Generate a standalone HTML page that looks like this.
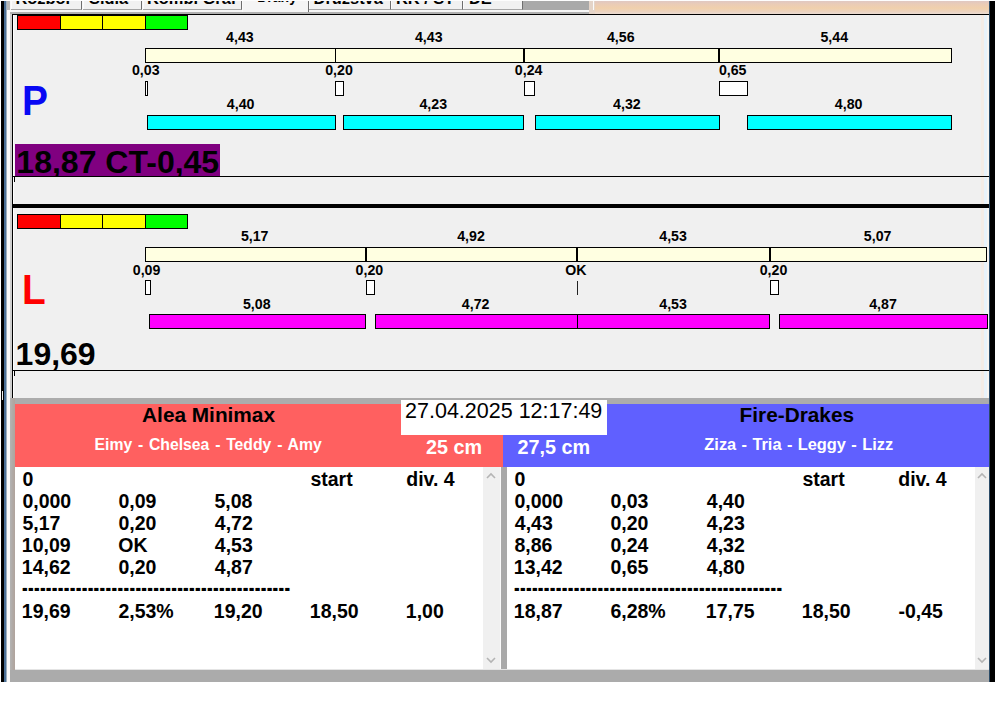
<!DOCTYPE html>
<html lang="cs">
<head>
<meta charset="utf-8">
<title>Dráhy</title>
<style>
html,body{margin:0;padding:0;background:#fff;}
body{width:995px;height:716px;position:relative;overflow:hidden;font-family:"Liberation Sans", sans-serif;}
.r{position:absolute;box-sizing:border-box;}
.t{position:absolute;white-space:pre;line-height:1;font-weight:bold;color:#000;transform-origin:0 0;display:block;}
.lab{transform:scaleY(1.06);transform-origin:0 84.65%;}
.tab{position:absolute;top:0;height:9.5px;box-sizing:border-box;background:#f1f1f1;border-right:1px solid #6e6e6e;border-bottom:1px solid #a6a6a6;box-shadow:inset 1px 1px 0 #fbfbfb;overflow:hidden;}
.tab.act{height:12px;background:#f5f5f5;border-bottom:0;}
</style>
</head>
<body>
<div class="r" style="left:1px;top:0px;width:3px;height:682px;background:#000;"></div>
<div class="r" style="left:4px;top:0px;width:2px;height:682px;background:#4a6f96;"></div>
<div class="r" style="left:6px;top:0px;width:1.4px;height:682px;background:#9fb0c0;"></div>
<div class="r" style="left:2px;top:391px;width:1.3px;height:9px;background:#f0f0f0;"></div>
<div class="r" style="left:7px;top:0px;width:3px;height:682px;background:#fafafa;"></div>
<div class="r" style="left:10px;top:10px;width:2px;height:388px;background:#cfcfcf;"></div>
<div class="r" style="left:7px;top:0px;width:3px;height:10px;background:#b8b8b8;"></div>
<div class="r" style="left:990px;top:1px;width:5px;height:681px;background:#000;"></div>
<div class="r" style="left:989px;top:1px;width:1px;height:681px;background:#2a4a66;"></div>
<div class="r" style="left:10px;top:1px;width:585px;height:12px;background:#f6f6f6;"></div>
<div class="r" style="left:10px;top:12px;width:585px;height:2px;background:#b0b0b0;"></div>
<div class="r" style="left:522px;top:1px;width:67px;height:9px;background:#a9a9a9;"></div>
<div class="r" style="left:589px;top:1px;width:6px;height:13px;background:#e4d4c8;"></div>
<div class="r" style="left:592.5px;top:1px;width:1.5px;height:9px;background:#fbfbfb;"></div>
<div class="r" style="left:595px;top:1px;width:394px;height:13px;background:linear-gradient(#e0c8c2 0%,#eaccb6 25%,#f0d0ac 55%,#ecd3be 80%,#eadbd3 100%);"></div>
<div class="r" style="left:0px;top:0px;width:995px;height:1px;background:#fdfdfd;z-index:5;"></div>
<div class="r" style="left:12px;top:14px;width:977px;height:384px;background:#f0f0f0;"></div>
<div class="r" style="left:12px;top:14px;width:1px;height:384px;background:#000;"></div>
<div class="r" style="left:13px;top:15px;width:1px;height:383px;background:#fff;"></div>
<div class="r" style="left:12px;top:14px;width:977px;height:1px;background:#000;"></div>
<div class="r" style="left:981px;top:15px;width:3px;height:383px;background:#f4ece6;"></div>
<div class="r" style="left:984px;top:15px;width:3px;height:383px;background:#e8f2fa;"></div>
<div class="r" style="left:987px;top:15px;width:2px;height:383px;background:#f8f4f0;"></div>
<div class="r" style="left:12px;top:176px;width:977px;height:1px;background:#000;"></div>
<div class="r" style="left:14px;top:176px;width:1px;height:6px;background:#000;"></div>
<div class="r" style="left:12px;top:204px;width:977px;height:4px;background:#000;"></div>
<div class="r" style="left:12px;top:370px;width:977px;height:1px;background:#000;"></div>
<div class="r" style="left:14px;top:370px;width:1px;height:6px;background:#000;"></div>
<div class="r" style="left:10px;top:398px;width:5px;height:284px;background:linear-gradient(90deg,#b4b4b4 0%,#b0aaa6 50%,#b0a39c 100%);"></div>
<div class="r" style="left:15px;top:398px;width:974px;height:6px;background:#acacac;"></div>
<div class="r" style="left:15px;top:403.6px;width:487.7px;height:63px;background:#ff6060;"></div>
<div class="r" style="left:502.7px;top:403.6px;width:486.3px;height:63px;background:#6060ff;"></div>
<div class="r" style="left:401px;top:400px;width:206px;height:35px;background:#fff;"></div>
<div class="r" style="left:15px;top:467px;width:468px;height:202px;background:#fff;"></div>
<div class="r" style="left:483px;top:467px;width:17px;height:202px;background:#f0f0f0;"></div>
<div class="r" style="left:500px;top:467px;width:1px;height:202px;background:#fbfbfb;"></div>
<div class="r" style="left:501px;top:467px;width:5.6px;height:202px;background:#a9a9a9;"></div>
<div class="r" style="left:506.6px;top:467px;width:468.4px;height:202px;background:#fff;"></div>
<div class="r" style="left:975px;top:467px;width:14px;height:202px;background:#f0f0f0;"></div>
<div class="r" style="left:15px;top:669px;width:974px;height:1px;background:#e4e4e4;"></div>
<div class="r" style="left:10px;top:670px;width:979px;height:12px;background:#ababab;"></div>
<div class="r" style="left:17px;top:15px;width:44px;height:15px;background:#ff0000;border:1px solid #000;"></div>
<div class="r" style="left:60px;top:15px;width:43px;height:15px;background:#ffff00;border:1px solid #000;"></div>
<div class="r" style="left:102px;top:15px;width:44px;height:15px;background:#ffff00;border:1px solid #000;"></div>
<div class="r" style="left:145px;top:15px;width:43px;height:15px;background:#00ff00;border:1px solid #000;"></div>
<div class="r" style="left:17px;top:214px;width:44px;height:15px;background:#ff0000;border:1px solid #000;"></div>
<div class="r" style="left:60px;top:214px;width:43px;height:15px;background:#ffff00;border:1px solid #000;"></div>
<div class="r" style="left:102px;top:214px;width:44px;height:15px;background:#ffff00;border:1px solid #000;"></div>
<div class="r" style="left:145px;top:214px;width:43px;height:15px;background:#00ff00;border:1px solid #000;"></div>
<div class="r" style="left:145px;top:48px;width:807px;height:15px;background:#ffffe1;border:1px solid #000;"></div>
<div class="r" style="left:335px;top:48px;width:1px;height:15px;background:#000;"></div>
<div class="r" style="left:523px;top:48px;width:2px;height:15px;background:#000;"></div>
<div class="r" style="left:718px;top:48px;width:2px;height:15px;background:#000;"></div>
<div class="r" style="left:145px;top:81px;width:3px;height:15px;background:#fff;border:1px solid #000;"></div>
<div class="r" style="left:335px;top:81px;width:9px;height:15px;background:#fff;border:1px solid #000;"></div>
<div class="r" style="left:524px;top:81px;width:11px;height:15px;background:#fff;border:1px solid #000;"></div>
<div class="r" style="left:719px;top:81px;width:29px;height:15px;background:#fff;border:1px solid #000;"></div>
<div class="r" style="left:147px;top:115px;width:189px;height:15px;background:#00ffff;border:1px solid #000;"></div>
<div class="r" style="left:343px;top:115px;width:181px;height:15px;background:#00ffff;border:1px solid #000;"></div>
<div class="r" style="left:535px;top:115px;width:185px;height:15px;background:#00ffff;border:1px solid #000;"></div>
<div class="r" style="left:747px;top:115px;width:205px;height:15px;background:#00ffff;border:1px solid #000;"></div>
<div class="r" style="left:145px;top:247px;width:842px;height:15px;background:#ffffe1;border:1px solid #000;"></div>
<div class="r" style="left:365px;top:247px;width:2px;height:15px;background:#000;"></div>
<div class="r" style="left:576px;top:247px;width:2px;height:15px;background:#000;"></div>
<div class="r" style="left:769px;top:247px;width:2px;height:15px;background:#000;"></div>
<div class="r" style="left:145px;top:280px;width:5.5px;height:15px;background:#fff;border:1px solid #000;"></div>
<div class="r" style="left:366px;top:280px;width:9px;height:15px;background:#fff;border:1px solid #000;"></div>
<div class="r" style="left:770px;top:280px;width:9px;height:15px;background:#fff;border:1px solid #000;"></div>
<div class="r" style="left:577px;top:281px;width:1px;height:14px;background:#222;"></div>
<div class="r" style="left:149px;top:314px;width:217px;height:15px;background:#ff00ff;border:1px solid #000;"></div>
<div class="r" style="left:375px;top:314px;width:203px;height:15px;background:#ff00ff;border:1px solid #000;"></div>
<div class="r" style="left:577px;top:314px;width:193px;height:15px;background:#ff00ff;border:1px solid #000;"></div>
<div class="r" style="left:779px;top:314px;width:209px;height:15px;background:#ff00ff;border:1px solid #000;"></div>
<svg class="r" style="left:485.5px;top:472px" width="10" height="8" viewBox="0 0 10 8"><path d="M1 6 L5 2 L9 6" fill="none" stroke="#b4b4b4" stroke-width="1.6"/></svg>
<svg class="r" style="left:485.5px;top:656px" width="10" height="8" viewBox="0 0 10 8"><path d="M1 2 L5 6 L9 2" fill="none" stroke="#b4b4b4" stroke-width="1.6"/></svg>
<svg class="r" style="left:977.0px;top:472px" width="10" height="8" viewBox="0 0 10 8"><path d="M1 6 L5 2 L9 6" fill="none" stroke="#b4b4b4" stroke-width="1.6"/></svg>
<svg class="r" style="left:977.0px;top:656px" width="10" height="8" viewBox="0 0 10 8"><path d="M1 2 L5 6 L9 2" fill="none" stroke="#b4b4b4" stroke-width="1.6"/></svg>
<span class="t lab" style="left:226.12px;top:30.28px;font-size:14.20px;">4,43</span>
<span class="t lab" style="left:414.97px;top:30.28px;font-size:14.20px;">4,43</span>
<span class="t lab" style="left:606.92px;top:30.28px;font-size:14.20px;">4,56</span>
<span class="t lab" style="left:820.44px;top:30.28px;font-size:14.20px;">5,44</span>
<span class="t lab" style="left:131.93px;top:63.48px;font-size:14.20px;">0,03</span>
<span class="t lab" style="left:325.23px;top:63.48px;font-size:14.20px;">0,20</span>
<span class="t lab" style="left:514.84px;top:63.48px;font-size:14.20px;">0,24</span>
<span class="t lab" style="left:718.90px;top:63.48px;font-size:14.20px;">0,65</span>
<span class="t lab" style="left:226.82px;top:97.48px;font-size:14.20px;">4,40</span>
<span class="t lab" style="left:419.47px;top:97.48px;font-size:14.20px;">4,23</span>
<span class="t lab" style="left:613.12px;top:97.48px;font-size:14.20px;">4,32</span>
<span class="t lab" style="left:834.87px;top:97.48px;font-size:14.20px;">4,80</span>
<span class="t lab" style="left:240.88px;top:229.48px;font-size:14.20px;">5,17</span>
<span class="t lab" style="left:457.22px;top:229.48px;font-size:14.20px;">4,92</span>
<span class="t lab" style="left:659.27px;top:229.48px;font-size:14.20px;">4,53</span>
<span class="t lab" style="left:863.83px;top:229.48px;font-size:14.20px;">5,07</span>
<span class="t lab" style="left:132.78px;top:262.68px;font-size:14.20px;">0,09</span>
<span class="t lab" style="left:355.58px;top:262.68px;font-size:14.20px;">0,20</span>
<span class="t lab" style="left:565.18px;top:262.68px;font-size:14.20px;">OK</span>
<span class="t lab" style="left:759.68px;top:262.68px;font-size:14.20px;">0,20</span>
<span class="t lab" style="left:242.95px;top:296.68px;font-size:14.20px;">5,08</span>
<span class="t lab" style="left:461.82px;top:296.68px;font-size:14.20px;">4,72</span>
<span class="t lab" style="left:659.27px;top:296.68px;font-size:14.20px;">4,53</span>
<span class="t lab" style="left:869.17px;top:296.68px;font-size:14.20px;">4,87</span>
<span class="t big" style="left:21.75px;top:78.65px;font-size:42.70px;transform:scaleX(0.91);color:#0808f4;">P</span>
<span class="t big" style="left:21.82px;top:268.45px;font-size:42.70px;transform:scaleX(0.91);color:#ff0000;">L</span>
<span class="t" style="left:15.58px;top:337.91px;font-size:32.00px;">19,69</span>
<div class="r" style="left:15px;top:144px;width:205px;height:32px;background:#800080;overflow:hidden;"><span class="t" style="left:1.36px;top:2.11px;font-size:32.00px;">18,87 CT-0,45</span></div>
<span class="t" style="left:142.09px;top:405.09px;font-size:20.80px;">Alea Minimax</span>
<span class="t" style="left:94.50px;top:436.57px;font-size:15.75px;word-spacing:1.4px;color:#fff;">Eimy - Chelsea - Teddy - Amy</span>
<span class="t" style="left:739.62px;top:405.09px;font-size:20.80px;">Fire-Drakes</span>
<span class="t" style="left:704.35px;top:436.02px;font-size:16.40px;word-spacing:0.8px;color:#fff;">Ziza - Tria - Leggy - Lizz</span>
<span class="t" style="left:405.07px;top:401.30px;font-size:21.50px;font-weight:normal;">27.04.2025 12:17:49</span>
<span class="t" style="left:426.12px;top:437.74px;font-size:19.80px;color:#fff;">25 cm</span>
<span class="t" style="left:517.46px;top:437.74px;font-size:19.80px;color:#fff;">27,5 cm</span>
<span class="t" style="left:22.41px;top:469.79px;font-size:19.50px;">0</span>
<span class="t" style="left:310.42px;top:469.79px;font-size:19.50px;">start</span>
<span class="t" style="left:406.22px;top:469.79px;font-size:19.50px;">div. 4</span>
<span class="t" style="left:22.41px;top:491.79px;font-size:19.50px;">0,000</span>
<span class="t" style="left:118.42px;top:491.79px;font-size:19.50px;">0,09</span>
<span class="t" style="left:214.41px;top:491.79px;font-size:19.50px;">5,08</span>
<span class="t" style="left:22.41px;top:513.79px;font-size:19.50px;">5,17</span>
<span class="t" style="left:118.42px;top:513.79px;font-size:19.50px;">0,20</span>
<span class="t" style="left:214.81px;top:513.79px;font-size:19.50px;">4,72</span>
<span class="t" style="left:21.83px;top:535.79px;font-size:19.50px;">10,09</span>
<span class="t" style="left:118.22px;top:535.79px;font-size:19.50px;">OK</span>
<span class="t" style="left:214.81px;top:535.79px;font-size:19.50px;">4,53</span>
<span class="t" style="left:21.83px;top:557.79px;font-size:19.50px;">14,62</span>
<span class="t" style="left:118.42px;top:557.79px;font-size:19.50px;">0,20</span>
<span class="t" style="left:214.81px;top:557.79px;font-size:19.50px;">4,87</span>
<span class="t" style="left:21.83px;top:601.79px;font-size:19.50px;">19,69</span>
<span class="t" style="left:118.42px;top:601.79px;font-size:19.50px;">2,53%</span>
<span class="t" style="left:213.83px;top:601.79px;font-size:19.50px;">19,20</span>
<span class="t" style="left:309.83px;top:601.79px;font-size:19.50px;">18,50</span>
<span class="t" style="left:405.83px;top:601.79px;font-size:19.50px;">1,00</span>
<span class="t" style="left:514.41px;top:469.79px;font-size:19.50px;">0</span>
<span class="t" style="left:802.41px;top:469.79px;font-size:19.50px;">start</span>
<span class="t" style="left:898.22px;top:469.79px;font-size:19.50px;">div. 4</span>
<span class="t" style="left:514.41px;top:491.79px;font-size:19.50px;">0,000</span>
<span class="t" style="left:610.41px;top:491.79px;font-size:19.50px;">0,03</span>
<span class="t" style="left:706.80px;top:491.79px;font-size:19.50px;">4,40</span>
<span class="t" style="left:514.80px;top:513.79px;font-size:19.50px;">4,43</span>
<span class="t" style="left:610.41px;top:513.79px;font-size:19.50px;">0,20</span>
<span class="t" style="left:706.80px;top:513.79px;font-size:19.50px;">4,23</span>
<span class="t" style="left:514.41px;top:535.79px;font-size:19.50px;">8,86</span>
<span class="t" style="left:610.41px;top:535.79px;font-size:19.50px;">0,24</span>
<span class="t" style="left:706.80px;top:535.79px;font-size:19.50px;">4,32</span>
<span class="t" style="left:513.83px;top:557.79px;font-size:19.50px;">13,42</span>
<span class="t" style="left:610.41px;top:557.79px;font-size:19.50px;">0,65</span>
<span class="t" style="left:706.80px;top:557.79px;font-size:19.50px;">4,80</span>
<span class="t" style="left:513.83px;top:601.79px;font-size:19.50px;">18,87</span>
<span class="t" style="left:610.41px;top:601.79px;font-size:19.50px;">6,28%</span>
<span class="t" style="left:705.83px;top:601.79px;font-size:19.50px;">17,75</span>
<span class="t" style="left:801.83px;top:601.79px;font-size:19.50px;">18,50</span>
<span class="t" style="left:898.41px;top:601.79px;font-size:19.50px;">-0,45</span>
<div class="tab" style="left:11px;width:71px;"><span class="t" style="left:4.52px;top:-9.98px;font-size:16.40px;">Rozbor</span></div>
<div class="tab" style="left:83px;width:59px;"><span class="t" style="left:6.07px;top:-9.98px;font-size:16.40px;">Sídla</span></div>
<div class="tab" style="left:143px;width:99px;"><span class="t" style="left:4.02px;top:-9.98px;font-size:16.40px;">Kombi Graf</span></div>
<div class="tab act" style="left:242px;width:67px;"><span class="t" style="left:15.26px;top:-10.15px;font-size:14.00px;">Dráhy</span></div>
<div class="tab" style="left:309px;width:82px;"><span class="t" style="left:4.62px;top:-9.98px;font-size:16.40px;">Družstva</span></div>
<div class="tab" style="left:391px;width:72px;"><span class="t" style="left:5.02px;top:-9.98px;font-size:16.40px;">KK / ST</span></div>
<div class="tab" style="left:463px;width:60px;"><span class="t" style="left:6.02px;top:-9.98px;font-size:16.40px;">DE</span></div>
<span class="t" style="left:22.3px;top:575.14px;font-size:25px;letter-spacing:0.45px;transform:scaleX(0.68);">---------------------------------------------</span>
<span class="t" style="left:514.3px;top:575.14px;font-size:25px;letter-spacing:0.45px;transform:scaleX(0.68);">---------------------------------------------</span>
</body>
</html>
